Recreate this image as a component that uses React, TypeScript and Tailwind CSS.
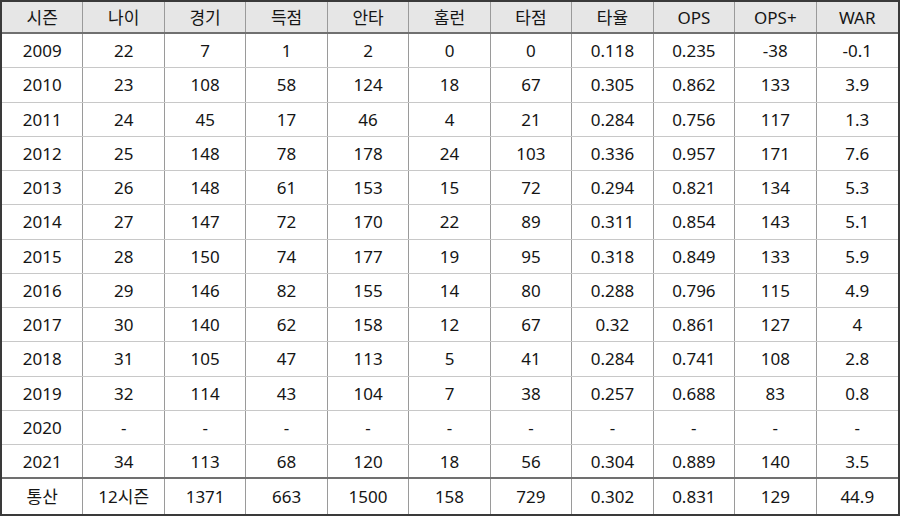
import React from 'react';

const headers = ['시즌', '나이', '경기', '득점', '안타', '홈런', '타점', '타율', 'OPS', 'OPS+', 'WAR'];

const rows: string[][] = [
  ['2009', '22', '7', '1', '2', '0', '0', '0.118', '0.235', '-38', '-0.1'],
  ['2010', '23', '108', '58', '124', '18', '67', '0.305', '0.862', '133', '3.9'],
  ['2011', '24', '45', '17', '46', '4', '21', '0.284', '0.756', '117', '1.3'],
  ['2012', '25', '148', '78', '178', '24', '103', '0.336', '0.957', '171', '7.6'],
  ['2013', '26', '148', '61', '153', '15', '72', '0.294', '0.821', '134', '5.3'],
  ['2014', '27', '147', '72', '170', '22', '89', '0.311', '0.854', '143', '5.1'],
  ['2015', '28', '150', '74', '177', '19', '95', '0.318', '0.849', '133', '5.9'],
  ['2016', '29', '146', '82', '155', '14', '80', '0.288', '0.796', '115', '4.9'],
  ['2017', '30', '140', '62', '158', '12', '67', '0.32', '0.861', '127', '4'],
  ['2018', '31', '105', '47', '113', '5', '41', '0.284', '0.741', '108', '2.8'],
  ['2019', '32', '114', '43', '104', '7', '38', '0.257', '0.688', '83', '0.8'],
  ['2020', '-', '-', '-', '-', '-', '-', '-', '-', '-', '-'],
  ['2021', '34', '113', '68', '120', '18', '56', '0.304', '0.889', '140', '3.5'],
];

const total = ['통산', '12시즌', '1371', '663', '1500', '158', '729', '0.302', '0.831', '129', '44.9'];

function Row({ cells, className }: { cells: string[]; className: string }) {
  return (
    <div className={`grid grid-cols-11 ${className}`}>
      {cells.map((c, i) => (
        <div
          key={i}
          className={`flex items-center justify-center ${i < cells.length - 1 ? 'border-r border-[#9a9a9a]' : ''}`}
        >
          {c}
        </div>
      ))}
    </div>
  );
}

export default function App() {
  return (
    <div
      className="w-[900px] h-[516px] bg-white border-2 border-[#3a3a3a] flex flex-col text-[17px] text-[#151515] leading-none"
      style={{ fontFamily: '"Noto Sans", "Noto Sans CJK KR", sans-serif' }}
    >
      <Row cells={headers} className="h-[32px] bg-[#e6e6e6] border-b-2 border-[#707070]" />
      {rows.map((r, i) => (
        <Row
          key={r[0]}
          cells={r}
          className={
            i === rows.length - 1
              ? 'h-[34.25px] border-b-2 border-[#707070]'
              : 'h-[34.25px] border-b border-[#c8c8c8]'
          }
        />
      ))}
      <Row cells={total} className="flex-1" />
    </div>
  );
}
